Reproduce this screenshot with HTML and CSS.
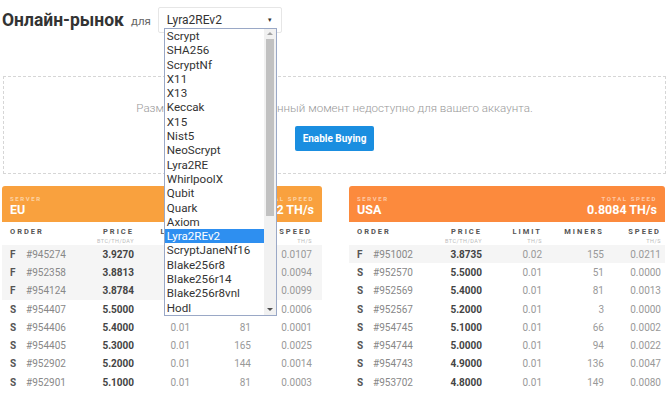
FILE: index.html
```html
<!DOCTYPE html>
<html>
<head>
    <title>Онлайн-рынок</title>
    <link rel="stylesheet" href="styles.css">
</head>
<body>
    <div class="top">
        <h1>Онлайн-рынок</h1>
        <span class="for">для</span>
        <div class="algo">
            <div class="algo-select">
                <span>Lyra2REv2</span>
                <span class="caret">&#9662;</span>
            </div>
            <div class="algo-list">
                <div class="algo-items">
                    <div class="item">Scrypt</div>
                    <div class="item">SHA256</div>
                    <div class="item">ScryptNf</div>
                    <div class="item">X11</div>
                    <div class="item">X13</div>
                    <div class="item">Keccak</div>
                    <div class="item">X15</div>
                    <div class="item">Nist5</div>
                    <div class="item">NeoScrypt</div>
                    <div class="item">Lyra2RE</div>
                    <div class="item">WhirlpoolX</div>
                    <div class="item">Qubit</div>
                    <div class="item">Quark</div>
                    <div class="item">Axiom</div>
                    <div class="item selected">Lyra2REv2</div>
                    <div class="item">ScryptJaneNf16</div>
                    <div class="item">Blake256r8</div>
                    <div class="item">Blake256r14</div>
                    <div class="item">Blake256r8vnl</div>
                    <div class="item">Hodl</div>
                </div>
                <div class="scrollbar">
                    <span class="arrow up"></span>
                    <div class="track"><div class="thumb"></div></div>
                    <span class="arrow down"></span>
                </div>
            </div>
        </div>
    </div>

    <div class="notice">
        <p>Размещение ордеров в данный момент недоступно для вашего аккаунта.</p>
        <button class="enable">Enable Buying</button>
    </div>

    <div class="markets">
        <div class="market eu">
            <div class="market-head">
                <div>
                    <div class="label">SERVER</div>
                    <div class="value">EU</div>
                </div>
                <div class="right">
                    <div class="label">TOTAL SPEED</div>
                    <div class="value">0.2562 TH/s</div>
                </div>
            </div>
            <table class="orders">
                <thead>
                    <tr>
                        <th class="order">ORDER</th>
                        <th>PRICE<small>BTC/TH/DAY</small></th>
                        <th>LIMIT<small>TH/S</small></th>
                        <th>MINERS</th>
                        <th>SPEED<small>TH/S</small></th>
                    </tr>
                </thead>
                <tbody>
                    <tr class="fixed"><td class="order"><b>F</b>#945274</td><td class="price">3.9270</td><td>0.02</td><td>162</td><td>0.0107</td></tr>
                    <tr class="fixed"><td class="order"><b>F</b>#952358</td><td class="price">3.8813</td><td>0.02</td><td>148</td><td>0.0094</td></tr>
                    <tr class="fixed"><td class="order"><b>F</b>#954124</td><td class="price">3.8784</td><td>0.02</td><td>151</td><td>0.0099</td></tr>
                    <tr><td class="order"><b>S</b>#954407</td><td class="price">5.5000</td><td>0.01</td><td>27</td><td>0.0006</td></tr>
                    <tr><td class="order"><b>S</b>#954406</td><td class="price">5.4000</td><td>0.01</td><td>81</td><td>0.0001</td></tr>
                    <tr><td class="order"><b>S</b>#954405</td><td class="price">5.3000</td><td>0.01</td><td>165</td><td>0.0025</td></tr>
                    <tr><td class="order"><b>S</b>#952902</td><td class="price">5.2000</td><td>0.01</td><td>144</td><td>0.0014</td></tr>
                    <tr><td class="order"><b>S</b>#952901</td><td class="price">5.1000</td><td>0.01</td><td>81</td><td>0.0003</td></tr>
                </tbody>
            </table>
        </div>

        <div class="market usa">
            <div class="market-head">
                <div>
                    <div class="label">SERVER</div>
                    <div class="value">USA</div>
                </div>
                <div class="right">
                    <div class="label">TOTAL SPEED</div>
                    <div class="value">0.8084 TH/s</div>
                </div>
            </div>
            <table class="orders">
                <thead>
                    <tr>
                        <th class="order">ORDER</th>
                        <th>PRICE<small>BTC/TH/DAY</small></th>
                        <th>LIMIT<small>TH/S</small></th>
                        <th>MINERS</th>
                        <th>SPEED<small>TH/S</small></th>
                    </tr>
                </thead>
                <tbody>
                    <tr class="fixed"><td class="order"><b>F</b>#951002</td><td class="price">3.8735</td><td>0.02</td><td>155</td><td>0.0211</td></tr>
                    <tr><td class="order"><b>S</b>#952570</td><td class="price">5.5000</td><td>0.01</td><td>51</td><td>0.0000</td></tr>
                    <tr><td class="order"><b>S</b>#952569</td><td class="price">5.4000</td><td>0.01</td><td>81</td><td>0.0013</td></tr>
                    <tr><td class="order"><b>S</b>#952567</td><td class="price">5.2000</td><td>0.01</td><td>3</td><td>0.0000</td></tr>
                    <tr><td class="order"><b>S</b>#954745</td><td class="price">5.1000</td><td>0.01</td><td>66</td><td>0.0002</td></tr>
                    <tr><td class="order"><b>S</b>#954744</td><td class="price">5.0000</td><td>0.01</td><td>94</td><td>0.0022</td></tr>
                    <tr><td class="order"><b>S</b>#954743</td><td class="price">4.9000</td><td>0.01</td><td>136</td><td>0.0047</td></tr>
                    <tr><td class="order"><b>S</b>#953702</td><td class="price">4.8000</td><td>0.01</td><td>149</td><td>0.0080</td></tr>
                </tbody>
            </table>
        </div>
    </div>
</body>
</html>
```

FILE: styles.css
```css
body {
    margin: 0;
    font-family: Roboto, "Liberation Sans", sans-serif;
    color: #333;
    background: #fff;
    overflow: hidden;
}
.top {
    display: flex;
    align-items: center;
    height: 40px;
    padding: 0 2px;
}
h1 {
    margin: 0;
    font-size: 17.5px;
    font-weight: bold;
    color: #333;
}
.for {
    font-size: 11.5px;
    color: #666;
    margin: 2px 0 0 7px;
}
.algo {
    position: relative;
    margin-left: 7px;
}
.algo-select {
    width: 124px;
    height: 26px;
    box-sizing: border-box;
    border: 1px solid #e6e6e6;
    border-radius: 2px;
    padding: 0 9px 0 8px;
    display: flex;
    align-items: center;
    justify-content: space-between;
    font-size: 12px;
    color: #333;
}
.caret {
    font-size: 7px;
    color: #333;
}
.algo-list {
    position: absolute;
    left: 6px;
    top: 21px;
    width: 113px;
    height: 288px;
    box-sizing: border-box;
    border: 1px solid #9aa8c6;
    background: #fff;
    display: flex;
    z-index: 10;
}
.algo-items {
    flex: 1;
}
.item {
    height: 14.3px;
    line-height: 14.3px;
    padding-left: 2px;
    font-size: 11.6px;
    color: #333;
    white-space: nowrap;
}
.item.selected {
    background: #2e8ff0;
    color: #fff;
}
.scrollbar {
    width: 12px;
    background: #f1f1f1;
    display: flex;
    flex-direction: column;
    align-items: center;
}
.arrow {
    height: 10px;
    width: 0;
    position: relative;
}
.arrow::after {
    content: '';
    position: absolute;
    left: -3px;
    top: 3px;
    border-left: 3px solid transparent;
    border-right: 3px solid transparent;
}
.arrow.up::after {
    border-bottom: 3px solid #a3a3a3;
}
.arrow.down::after {
    border-top: 3px solid #505050;
}
.track {
    flex: 1;
    width: 100%;
}
.thumb {
    width: 8px;
    height: 177px;
    margin: 0 auto;
    background: #c1c1c1;
}
.notice {
    margin: 36px 4px 0 3px;
    height: 98px;
    box-sizing: border-box;
    border: 1px dashed #d6d6d6;
    text-align: center;
    padding-top: 24px;
}
.notice p {
    margin: 0 0 11px;
    font-size: 11.6px;
    font-weight: 300;
    color: #999;
}
.enable {
    width: 79px;
    height: 25px;
    border: none;
    border-radius: 2px;
    background: #1a8ee0;
    color: #fff;
    font-family: Roboto, "Liberation Sans", sans-serif;
    font-size: 10px;
    font-weight: bold;
    padding: 0;
}
.markets {
    display: flex;
    gap: 27px;
    margin-top: 12px;
    padding-left: 2px;
}
.market.eu {
    width: 320px;
}
.market.usa {
    width: 316px;
}
.market-head {
    height: 36px;
    box-sizing: border-box;
    padding: 8px 8px 0;
    border-radius: 3px 3px 0 0;
    display: flex;
    justify-content: space-between;
    color: #fff;
}
.eu .market-head {
    background: #f9a13e;
}
.usa .market-head {
    background: #fc8a3d;
}
.market-head .right {
    text-align: right;
}
.label {
    font-size: 6px;
    font-weight: bold;
    letter-spacing: 1.6px;
    color: rgba(255, 255, 255, 0.55);
    line-height: 9px;
}
.value {
    font-size: 12.5px;
    font-weight: bold;
    line-height: 14px;
}
.orders {
    width: 100%;
    border-collapse: collapse;
    table-layout: fixed;
    font-size: 10px;
}
.orders th {
    height: 23px;
    text-align: right;
    vertical-align: top;
    padding: 5px 0 0;
    font-size: 7.5px;
    font-weight: bold;
    letter-spacing: 2px;
    color: #555;
    box-sizing: border-box;
}
.orders th small {
    display: block;
    font-size: 5.5px;
    font-weight: normal;
    letter-spacing: 0.5px;
    color: #bbb;
    margin-top: 2px;
}
.orders th.order,
.orders td.order {
    text-align: left;
    padding-left: 8px;
}
.orders th:last-child,
.orders td:last-child {
    padding-right: 4px;
}
.eu .orders th:last-child,
.eu .orders td:last-child {
    padding-right: 10px;
}
.orders th:nth-child(2) { width: 60px; }
.orders th:nth-child(3) { width: 60px; }
.orders th:nth-child(4) { width: 62px; }
.orders th:nth-child(5) { width: 61px; }
.eu .orders th:nth-child(3) { width: 56px; }
.eu .orders th:nth-child(4) { width: 61px; }
.eu .orders th:nth-child(5) { width: 71px; }
.orders td {
    height: 18.3px;
    padding: 0;
    text-align: right;
    color: #999;
}
.orders td.order {
    color: #888;
}
.orders td.order b {
    display: inline-block;
    width: 16px;
    color: #555;
}
.orders td.price {
    font-weight: bold;
    color: #444;
}
.orders tr.fixed td {
    background: #f5f5f5;
}
```
